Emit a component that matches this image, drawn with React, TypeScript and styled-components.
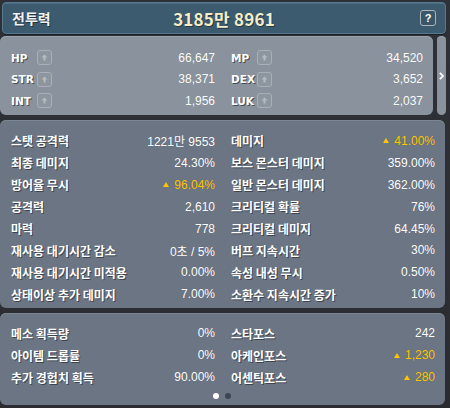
import React from "react";
import styled, { createGlobalStyle } from "styled-components";

const Global = createGlobalStyle`
  html, body { margin: 0; padding: 0; background: #2a2d33; }
  body { width: 450px; height: 408px; overflow: hidden; font-family: "Liberation Sans", "Noto Sans CJK KR", sans-serif; }
`;

const Page = styled.div`
  width: 450px;
  height: 408px;
  background: linear-gradient(180deg, #2e3137 0%, #2a2c31 100%);
  display: flex;
  flex-direction: column;
  overflow: hidden;
`;

const Header = styled.div`
  margin: 2px 4px 0 2px;
  height: 32px;
  box-sizing: border-box;
  border: 1px solid #56788c;
  border-radius: 4px;
  background: #3d5b6f;
  box-shadow: inset 0 1px 0 #4e6e82, 0 1px 0 #1c2328;
  display: grid;
  grid-template-columns: 1fr auto 1fr;
  align-items: center;
  padding: 0 9px 0 9px;
`;

const Title = styled.div`
  color: #f2f2f2;
  font-family: "Noto Sans CJK KR", sans-serif;
  font-weight: 700;
  font-size: 14px;
  text-shadow: 1px 1px 0 rgba(0,0,0,0.45);
`;

const Power = styled.div`
  color: #f4edc6;
  font-family: "Noto Sans CJK KR", sans-serif;
  font-weight: 700;
  font-size: 17px;
  letter-spacing: 0.2px;
  text-shadow: 1px 1px 0 rgba(0,0,0,0.4);
`;

const Help = styled.div`
  justify-self: end;
  width: 16px;
  height: 16px;
  box-sizing: border-box;
  border: 1px solid #a9b7c0;
  border-radius: 3px;
  background: #3a5668;
  color: #fff;
  font-size: 11px;
  font-weight: 700;
  display: flex;
  align-items: center;
  justify-content: center;
`;

const StatWrap = styled.div`
  margin-top: 2px;
  display: flex;
  gap: 4px;
  height: 79px;
`;

const Panel = styled.div<{ $tone: "light" | "dark" }>`
  background: ${(p) => (p.$tone === "light" ? "#8a939d" : "#6b7583")};
  border-radius: 6px;
  box-shadow: inset 0 1px 0 ${(p) => (p.$tone === "light" ? "#9aa3ac" : "#7b8593")};
  box-sizing: border-box;
`;

const StatPanel = styled(Panel)`
  width: 433px;
  padding: 11px 10px 3px 11px;
  display: grid;
  grid-template-columns: 204px 192px;
  column-gap: 16px;
  grid-auto-rows: 21.5px;
`;

const Side = styled(Panel)`
  width: 9px;
  display: flex;
  align-items: center;
  justify-content: center;
`;

const StatRow = styled.div`
  display: flex;
  align-items: center;
`;

const StatLabel = styled.span`
  width: 26px;
  color: #fff;
  font-family: "DejaVu Sans", sans-serif;
  font-weight: 700;
  font-size: 10.5px;
  text-shadow: 1px 1px 0 rgba(40,45,52,0.7);
`;

const Plus = styled.span`
  width: 15px;
  height: 15px;
  box-sizing: border-box;
  border: 1px solid #a8afb6;
  border-radius: 3px;
  background: #8d969f;
  display: flex;
  align-items: center;
  justify-content: center;
`;

const Value = styled.span<{ $up?: boolean }>`
  margin-left: auto;
  color: ${(p) => (p.$up ? "#ffc600" : "#ffffff")};
  font-size: 12px;
  display: flex;
  align-items: center;
  gap: 5px;
  text-shadow: 0 0 1px rgba(0,0,0,0.15);
`;

const MainPanel = styled(Panel)`
  margin-top: 5px;
  width: 445px;
  padding: 10px 10px 3px 11px;
  display: grid;
  grid-template-columns: 204px 204px;
  column-gap: 16px;
  grid-auto-rows: 21.9px;
`;

const BottomPanel = styled(Panel)`
  margin-top: 5px;
  width: 445px;
  height: 92px;
  padding: 9px 10px 0 11px;
  display: flex;
  flex-direction: column;
`;

const BottomGrid = styled.div`
  display: grid;
  grid-template-columns: 204px 204px;
  column-gap: 16px;
  grid-auto-rows: 22px;
`;

const Row = styled.div`
  display: flex;
  align-items: center;
`;

const Label = styled.span`
  color: #fff;
  font-family: "Noto Sans CJK KR", sans-serif;
  font-weight: 700;
  font-size: 12px;
  text-shadow: 1px 1px 0 rgba(35,40,48,0.65);
`;

const Dots = styled.div`
  margin-top: 5px;
  display: flex;
  justify-content: center;
  gap: 6px;
  padding-right: 2px;
`;

const Dot = styled.span<{ $active?: boolean }>`
  width: 6px;
  height: 6px;
  border-radius: 50%;
  background: ${(p) => (p.$active ? "#ffffff" : "#3b4654")};
`;

const Tri = () => (
  <svg width="6" height="5" viewBox="0 0 6 5">
    <path d="M3 0 L6 5 L0 5 Z" fill="#ffc600" />
  </svg>
);

const UpIcon = () => (
  <svg width="7" height="7" viewBox="0 0 7 7">
    <path d="M3.5 0.5 L6.5 3.5 L4.5 3.5 L4.5 6.5 L2.5 6.5 L2.5 3.5 L0.5 3.5 Z" fill="#b4bbc2" />
  </svg>
);

const Chevron = () => (
  <svg width="5" height="8" viewBox="0 0 5 8">
    <path d="M0.8 0.8 L4 4 L0.8 7.2" fill="none" stroke="#ffffff" strokeWidth="1.7" />
  </svg>
);

type Item = { label: string; value: string; up?: boolean };

const stats: Item[] = [
  { label: "HP", value: "66,647" },
  { label: "MP", value: "34,520" },
  { label: "STR", value: "38,371" },
  { label: "DEX", value: "3,652" },
  { label: "INT", value: "1,956" },
  { label: "LUK", value: "2,037" },
];

const main: Item[] = [
  { label: "스탯 공격력", value: "1221만 9553" },
  { label: "데미지", value: "41.00%", up: true },
  { label: "최종 데미지", value: "24.30%" },
  { label: "보스 몬스터 데미지", value: "359.00%" },
  { label: "방어율 무시", value: "96.04%", up: true },
  { label: "일반 몬스터 데미지", value: "362.00%" },
  { label: "공격력", value: "2,610" },
  { label: "크리티컬 확률", value: "76%" },
  { label: "마력", value: "778" },
  { label: "크리티컬 데미지", value: "64.45%" },
  { label: "재사용 대기시간 감소", value: "0초 / 5%" },
  { label: "버프 지속시간", value: "30%" },
  { label: "재사용 대기시간 미적용", value: "0.00%" },
  { label: "속성 내성 무시", value: "0.50%" },
  { label: "상태이상 추가 데미지", value: "7.00%" },
  { label: "소환수 지속시간 증가", value: "10%" },
];

const bottom: Item[] = [
  { label: "메소 획득량", value: "0%" },
  { label: "스타포스", value: "242" },
  { label: "아이템 드롭률", value: "0%" },
  { label: "아케인포스", value: "1,230", up: true },
  { label: "추가 경험치 획득", value: "90.00%" },
  { label: "어센틱포스", value: "280", up: true },
];

const renderRow = (it: Item) => (
  <Row key={it.label}>
    <Label>{it.label}</Label>
    <Value $up={it.up}>
      {it.up && <Tri />}
      {it.value}
    </Value>
  </Row>
);

export default function App() {
  return (
    <Page>
      <Global />
      <Header>
        <Title>전투력</Title>
        <Power>3185만 8961</Power>
        <Help>?</Help>
      </Header>
      <StatWrap>
        <StatPanel $tone="light">
          {stats.map((s) => (
            <StatRow key={s.label}>
              <StatLabel>{s.label}</StatLabel>
              <Plus>
                <UpIcon />
              </Plus>
              <Value>{s.value}</Value>
            </StatRow>
          ))}
        </StatPanel>
        <Side $tone="light">
          <Chevron />
        </Side>
      </StatWrap>
      <MainPanel $tone="dark">{main.map(renderRow)}</MainPanel>
      <BottomPanel $tone="dark">
        <BottomGrid>{bottom.map(renderRow)}</BottomGrid>
        <Dots>
          <Dot $active />
          <Dot />
        </Dots>
      </BottomPanel>
    </Page>
  );
}
